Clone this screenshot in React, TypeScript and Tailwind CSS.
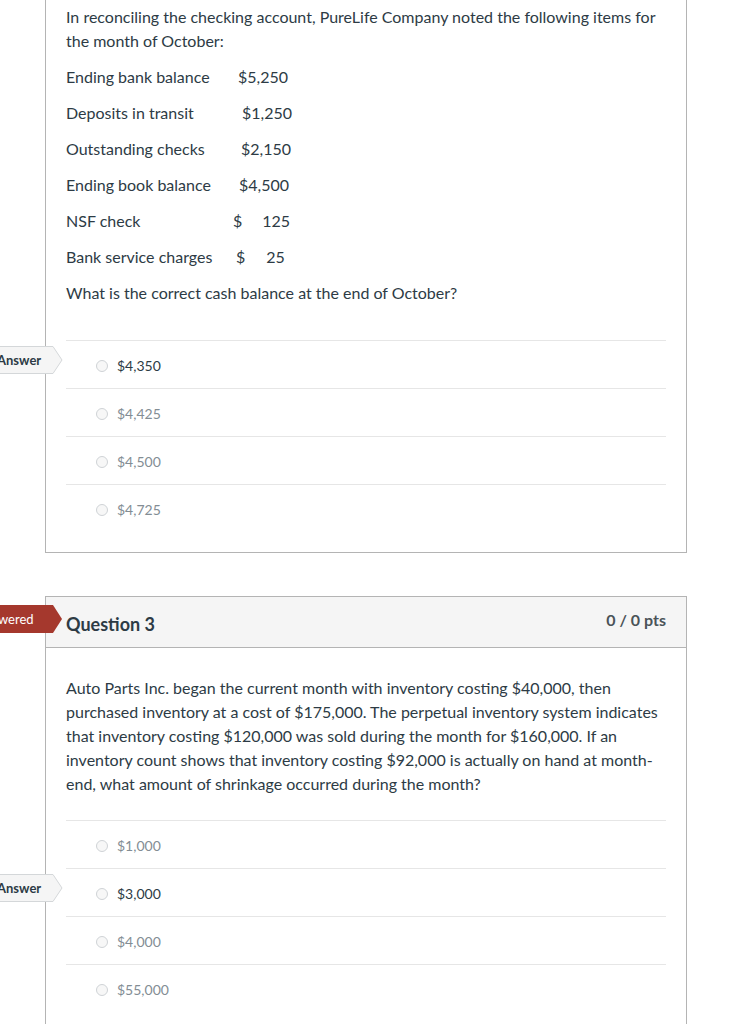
import React from "react";

type Answer = { text: string; correct?: boolean };

const q2Rows = [
  { label: "Ending bank balance", cur: "$", value: "5,250", cls: "ml-[0px]", gap: "ml-[0px]" },
  { label: "Deposits in transit", cur: "$", value: "1,250", cls: "ml-[4px]", gap: "ml-[0px]" },
  { label: "Outstanding checks", cur: "$", value: "2,150", cls: "ml-[3px]", gap: "ml-[0px]" },
  { label: "Ending book balance", cur: "$", value: "4,500", cls: "ml-[1px]", gap: "ml-[0px]" },
  { label: "NSF check", cur: "$", value: "125", cls: "-ml-[5px]", gap: "ml-[20px]" },
  { label: "Bank service charges", cur: "$", value: "25", cls: "-ml-[2px]", gap: "ml-[21px]" },
];

const q2Answers: Answer[] = [
  { text: "$4,350", correct: true },
  { text: "$4,425" },
  { text: "$4,500" },
  { text: "$4,725" },
];

const q3Answers: Answer[] = [
  { text: "$1,000" },
  { text: "$3,000", correct: true },
  { text: "$4,000" },
  { text: "$55,000" },
];

function AnswerFlag() {
  return (
    <div className="absolute left-[-76px] top-[5px] h-[28px] w-[73px]">
      <svg className="absolute inset-0" width="73" height="28" viewBox="0 0 73 28">
        <polygon points="0.5,0.5 63,0.5 72,14 63,27.5 0.5,27.5" fill="#f5f5f5" stroke="#d4d7d9" />
      </svg>
      <span className="relative block pl-[7px] text-[13px] font-bold leading-[28px] text-[#2d3b45]">
        Answer
      </span>
    </div>
  );
}

function AnswerList({ answers }: { answers: Answer[] }) {
  return (
    <div>
      {answers.map((a) => (
        <div key={a.text} className="relative h-[48px] border-t border-[#e6e6e6]">
          {a.correct && <AnswerFlag />}
          <div className="flex items-center pl-[30px] pt-[13px]">
            <span className="h-[12px] w-[12px] rounded-full border border-[#cfd3d6] bg-[#f7f7f7]" />
            <span
              className={
                a.correct
                  ? "ml-[9px] text-[14px] leading-[24px] text-[#2d3b45]"
                  : "ml-[9px] text-[14px] leading-[24px] text-[#838d94]"
              }
            >
              {a.text}
            </span>
          </div>
        </div>
      ))}
    </div>
  );
}

export default function App() {
  return (
    <div
      className="min-h-screen bg-white pl-[45px] text-[16px] leading-[24px] text-[#2d3b45]"
      style={{ fontFamily: "Lato, 'Liberation Sans', sans-serif" }}
    >
      {/* question 2, top clipped */}
      <div className="relative w-[642px] border-x border-b border-[#b4b4b4] px-[20px] pt-[5px] pb-[20px]">
        <p className="mb-[12px]">
          In reconciling the checking account, PureLife Company noted the following items for
          the month of October:
        </p>
        {q2Rows.map((r) => (
          <p key={r.label} className="mb-[12px] flex">
            <span className="w-[172px] shrink-0">{r.label}</span>
            <span className={r.cls}>{r.cur}</span>
            <span className={r.gap}>{r.value}</span>
          </p>
        ))}
        <p>What is the correct cash balance at the end of October?</p>
        <div className="mt-[35px]">
          <AnswerList answers={q2Answers} />
        </div>
      </div>

      {/* question 3 */}
      <div className="relative mt-[43px] w-[642px] border border-[#b4b4b4]">
        <div className="absolute left-[-90px] top-[8px] h-[28px] w-[106px]">
          <svg className="absolute inset-0" width="106" height="28" viewBox="0 0 106 28">
            <polygon points="0,0 97,0 106,14 97,28 0,28" fill="#a5382d" />
          </svg>
          <span className="relative block pl-[6px] text-[13px] leading-[28px] text-white">
            Unanswered
          </span>
        </div>
        <div className="flex h-[51px] items-center justify-between border-b border-[#b4b4b4] bg-[#f5f5f5] pl-[20px] pr-[20px]">
          <span className="pt-[4px] text-[18px] font-bold">Question 3</span>
          <span className="pb-[4px] text-[16px] font-bold text-[#4a5358]">0 / 0 pts</span>
        </div>
        <div className="px-[20px] pt-[28px] pb-[20px]">
          <p>
            Auto Parts Inc. began the current month with inventory costing $40,000, then
            purchased inventory at a cost of $175,000. The perpetual inventory system indicates
            that inventory costing $120,000 was sold during the month for $160,000. If an
            inventory count shows that inventory costing $92,000 is actually on hand at
            month-end, what amount of shrinkage occurred during the month?
          </p>
          <div className="mt-[24px]">
            <AnswerList answers={q3Answers} />
          </div>
        </div>
      </div>
    </div>
  );
}
